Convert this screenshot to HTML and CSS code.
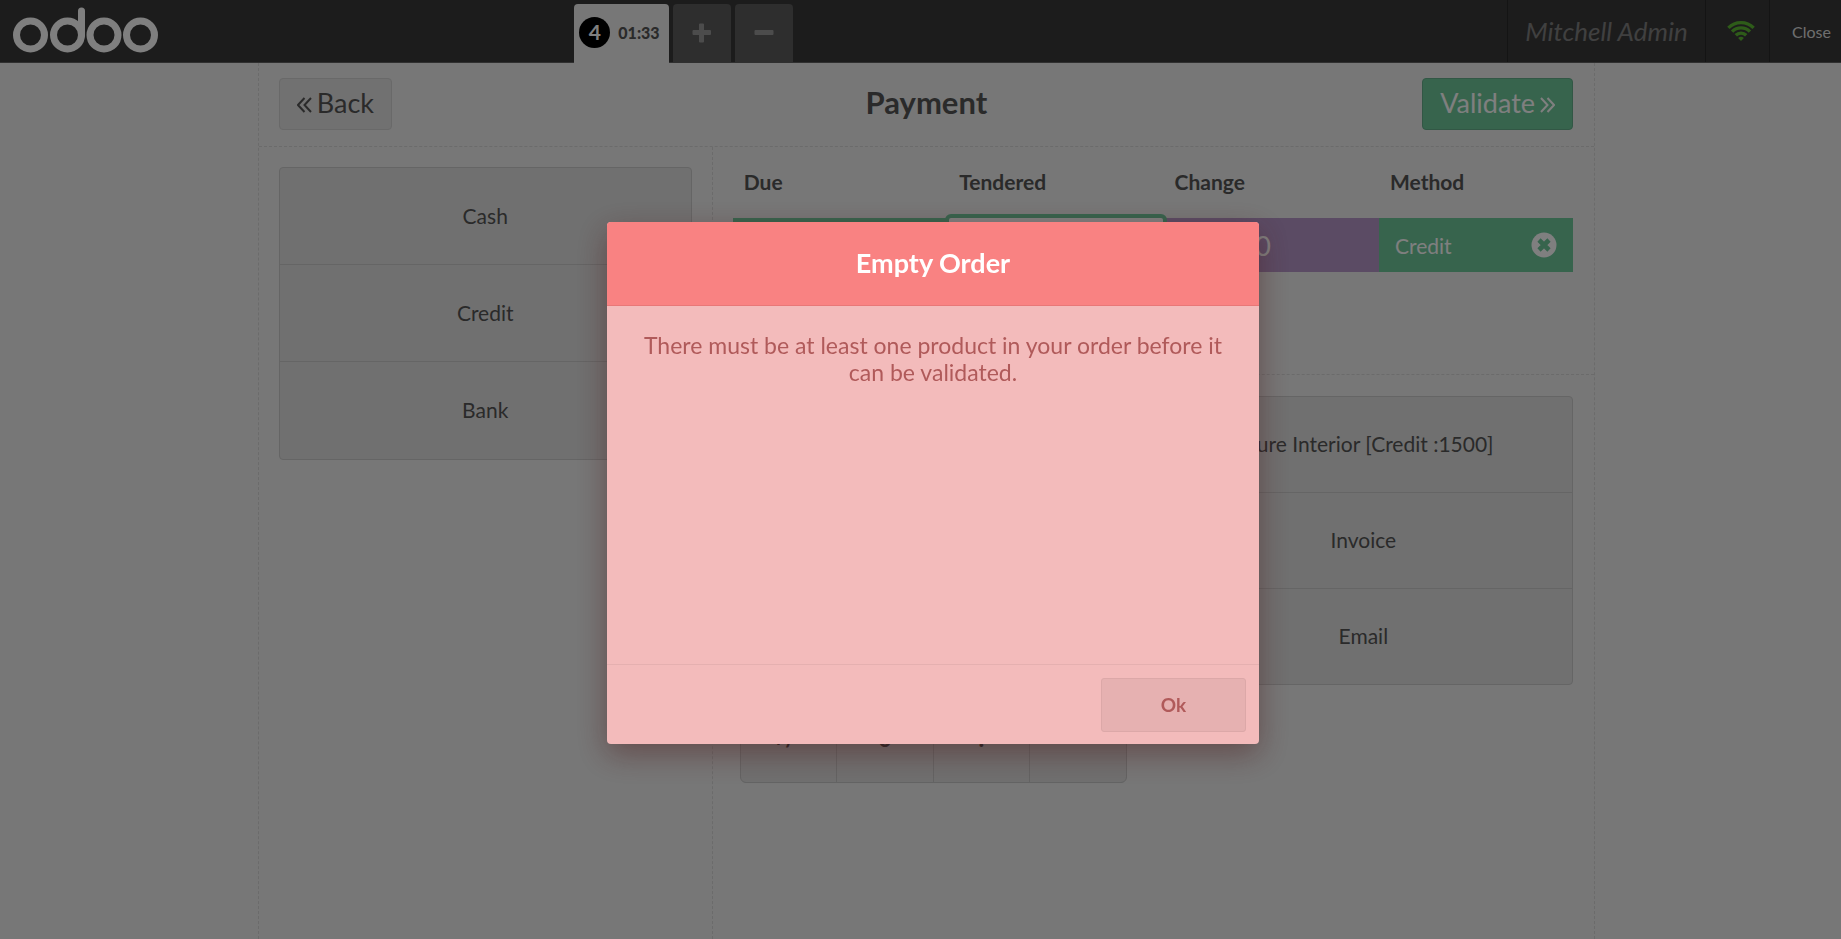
FILE: index.html
```html
<!DOCTYPE html>
<html lang="en">
<head>
<meta charset="utf-8">
<meta name="viewport" content="width=device-width, initial-scale=1">
<title>Odoo POS - Payment</title>
<link rel="stylesheet" href="styles.css">
</head>
<body>
<div class="pos">
  <header class="topbar">
    <svg class="logo" viewBox="0 0 146 46" role="img" aria-label="odoo">
      <g fill="none" stroke="#fff" stroke-width="7">
        <circle cx="17.500" cy="28" r="14"/>
        <circle cx="54.500" cy="28" r="14"/>
        <circle cx="91" cy="28" r="14"/>
        <circle cx="127.500" cy="28" r="14"/>
        <path d="M68.500 28V4" stroke-linecap="round"/>
      </g>
    </svg>
    <nav class="orders" aria-label="Orders">
      <button class="order selected"><span class="seq">4</span><span>01:33</span></button>
      <button class="order tool" aria-label="New order"><svg viewBox="0 0 20 20"><path d="M7 1.500Q7 .5 8 .5h3q1 0 1 1V7h6q1 0 1 1v3q0 1-1 1h-6v6.500q0 1-1 1H8q-1 0-1-1V12H1.500q-1 0-1-1V8q0-1 1-1H7z"/></svg></button>
      <button class="order tool" aria-label="Delete order"><svg viewBox="0 0 20 20"><rect x=".5" y="7" width="19" height="5" rx="1"/></svg></button>
    </nav>
    <div class="username">Mitchell Admin</div>
    <div class="wifi">
      <svg viewBox="0 0 30 22" role="img" aria-label="Connected">
        <g fill="none" stroke="#5cb832" stroke-width="3.400">
          <path d="M2.400 7.900A17.800 17.800 0 0 1 27.600 7.900"/>
          <path d="M6.100 11.600A12.600 12.600 0 0 1 23.900 11.600"/>
          <path d="M9.800 15.300A7.400 7.400 0 0 1 20.200 15.300"/>
        </g>
        <path d="M15 21l-2.900-2.900A4.100 4.100 0 0 1 17.900 18.100z" fill="#5cb832"/>
      </svg>
    </div>
    <button class="close">Close</button>
  </header>

  <main class="payment">
    <div class="heading">
      <button class="btn"><svg viewBox="0 0 15 16"><path d="M7.500 1 1 8l6.500 7M14 1 7.500 8l6.500 7"/></svg>Back</button>
      <h1>Payment</h1>
      <button class="btn validate">Validate<svg viewBox="0 0 15 16"><path d="M1 1l6.500 7L1 15M7.500 1 14 8l-6.500 7"/></svg></button>
    </div>
    <div class="columns">
      <section class="methods">
        <div class="stack">
          <button>Cash</button>
          <button>Credit</button>
          <button>Bank</button>
        </div>
      </section>
      <section class="details">
        <div class="lines">
          <table>
            <thead><tr><th>Due</th><th>Tendered</th><th>Change</th><th class="last">Method</th></tr></thead>
            <tbody><tr>
              <td>0.00</td>
              <td class="tendered"><span>0.00</span></td>
              <td class="change">0.00</td>
              <td class="method"><div>Credit
                <button aria-label="Delete line"><svg viewBox="0 0 26 26"><circle cx="13" cy="13" r="12.500" fill="#fff"/><path d="M8 8l10 10M18 8 8 18" stroke="#6ec89b" stroke-width="4.600"/></svg></button></div></td>
            </tr></tbody>
          </table>
        </div>
        <div class="lower">
          <div class="numpad">
            <button>1</button><button>2</button><button>3</button><button>+10</button>
            <button>4</button><button>5</button><button>6</button><button>+20</button>
            <button>7</button><button>8</button><button>9</button><button>+50</button>
            <button>+/-</button><button>0</button><button>.</button><button aria-label="Backspace"><svg viewBox="0 0 22 14"><path d="M7 1h14v12H7L1 7z" fill="none" stroke="#555" stroke-width="2"/></svg></button>
          </div>
          <div class="stack options">
            <button>Azure Interior [Credit :1500]</button>
            <button>Invoice</button>
            <button>Email</button>
          </div>
        </div>
      </section>
    </div>
  </main>
</div>

<div class="overlay">
  <div class="popup" role="alertdialog" aria-labelledby="popup-title" aria-describedby="popup-text">
    <h2 id="popup-title">Empty Order</h2>
    <p id="popup-text">There must be at least one product in your order before it can be validated.</p>
    <footer><button>Ok</button></footer>
  </div>
</div>
</body>
</html>
```
FILE: styles.css
```css
* { box-sizing: border-box; }

body {
  margin: 0;
  background: #eee;
  color: #555;
  font-family: Lato, "Open Sans", sans-serif;
  overflow: hidden;
}

button {
  margin: 0;
  padding: 0;
  border: 0;
  background: none;
  color: inherit;
  font: inherit;
}

h1, h2, p { margin: 0; }

.pos {
  display: flex;
  flex-direction: column;
  min-height: 100vh;
}

/* Top bar */
.topbar {
  display: flex;
  height: 63px;
  border-bottom: 1px solid #606060;
  background: #393939;
  color: #fff;
}

.logo {
  width: 146px;
  height: 46px;
  margin: 7px 0 0 13px;
}

.orders {
  display: flex;
  flex: 1;
  gap: 4px;
  margin-left: 415px;
  padding-top: 4px;
}

.order {
  display: flex;
  align-items: center;
  justify-content: center;
  width: 58px;
  height: 58px;
  border-radius: 4px 4px 0 0;
  background: #5c5c5c;
}

.order.selected {
  gap: 8px;
  width: 95px;
  height: 59px;
  padding: 0 4px 3px 0;
  background: #eee;
  color: #555;
  font-size: 16px;
  font-weight: 900;
}

.seq {
  width: 31px;
  height: 31px;
  border-radius: 50%;
  background: #000;
  color: #fff;
  font-size: 21px;
  font-weight: 700;
  line-height: 30px;
  text-align: center;
}

.tool svg {
  width: 20px;
  height: 20px;
  fill: #999;
}

.username,
.wifi,
.close {
  display: flex;
  align-items: center;
  justify-content: center;
  border-left: 1px solid #292929;
}

.username {
  width: 198px;
  color: #808080;
  font-size: 26px;
  font-style: italic;
}

.wifi {
  width: 64px;
  padding-left: 6px;
}

.wifi svg {
  width: 30px;
  height: 22px;
}

.close {
  width: 72px;
  padding: 0 0 0 12px;
  color: #ddd;
  font-size: 16px;
}

/* Payment screen */
.payment {
  display: flex;
  flex: 1;
  flex-direction: column;
  margin: 0 246px 0 14%;
  border: dashed #d6d6d6;
  border-width: 0 1px;
}

.heading {
  display: flex;
  align-items: center;
  justify-content: space-between;
  position: relative;
  height: 84px;
  padding: 0 21px 2px 20px;
  border-bottom: 1px dashed #d6d6d6;
}

.heading h1 {
  position: absolute;
  inset: 0;
  font-size: 31px;
  font-weight: 700;
  line-height: 79px;
  text-align: center;
  pointer-events: none;
}

.btn {
  display: flex;
  align-items: center;
  gap: 5px;
  height: 52px;
  padding: 0 17px 2px;
  border: 1px solid #d2d2d2;
  border-radius: 4px;
  background: #e2e2e2;
  font-size: 27px;
}

.btn svg {
  width: 15px;
  height: 16px;
  margin-top: 4px;
  fill: none;
  stroke: currentColor;
  stroke-width: 2;
}

.validate {
  border-color: #64af8a;
  background: #6ec89b;
  color: #fff;
}

.columns {
  display: flex;
  flex: 1;
}

.methods {
  flex: 0 0 34%;
  padding: 20px;
  border-right: 1px dashed #d6d6d6;
}

.stack {
  display: flex;
  flex-direction: column;
  border: 1px solid #cacaca;
  border-radius: 4px;
  background: #e0e0e0;
  font-size: 21px;
}

.stack button {
  height: 97px;
  padding-bottom: 2px;
  border-bottom: 1px solid #cacaca;
}

.stack button:last-child { border-bottom: 0; }

.details {
  flex: 1;
  min-width: 0;
}

.lines {
  height: 228px;
  padding: 0 21px 0 20px;
  border-bottom: 1px dashed #d6d6d6;
}

table {
  width: 100%;
  border-collapse: collapse;
  table-layout: fixed;
  text-align: left;
}

th {
  height: 71px;
  padding: 0 11px 2px;
  font-size: 21px;
  font-weight: 700;
}

th.last { width: 194px; }

td {
  height: 54px;
  padding: 0 16px;
  background: #6ec89b;
  color: #fff;
  font-size: 27px;
}

.tendered {
  position: relative;
  color: #555;
}

.tendered span {
  position: absolute;
  inset: -4px -3px -4px -3px;
  padding: 0 16px;
  border: 4px solid #6ec89b;
  border-radius: 6px;
  background: #fff;
  line-height: 54px;
}

.change {
  padding-left: 54px;
  background: #b696c8;
}

.method div {
  display: flex;
  align-items: center;
  justify-content: space-between;
  font-size: 21px;
}

.method button { display: flex; }

.method svg {
  width: 26px;
  height: 26px;
}

.lower {
  display: flex;
  align-items: flex-start;
  gap: 27px;
  padding: 21px 21px 0 27px;
}

.numpad {
  display: grid;
  flex: 0 0 387px;
  grid-template-columns: repeat(4, 1fr);
  grid-template-rows: repeat(4, 1fr);
  gap: 1px;
  height: 387px;
  overflow: hidden;
  border: 1px solid #c8c8c8;
  border-radius: 6px;
  background: #c8c8c8;
  font-size: 24px;
  font-weight: 700;
}

.numpad button {
  padding-top: 6px;
  background: #e0e0e0;
}

.numpad svg {
  width: 22px;
  height: 14px;
  margin-bottom: 4px;
}

.options { flex: 1; }
.options button { height: 96px; }
.options button:last-child { height: 95px; }

/* Error popup */
.overlay {
  display: flex;
  align-items: center;
  justify-content: center;
  position: fixed;
  inset: 0;
  padding: 27px 0 0 25px;
  background: rgba(0, 0, 0, 0.5);
}

.popup {
  display: flex;
  flex-direction: column;
  width: 652px;
  min-height: 522px;
  overflow: hidden;
  border-radius: 4px;
  background: #f3bbbb;
  box-shadow: 0 10px 30px rgba(75, 25, 25, 0.45);
  color: #b05a5a;
  text-align: center;
}

.popup h2 {
  height: 84px;
  border-bottom: 1px solid #e87777;
  background: #f98282;
  color: #fff;
  font-size: 27px;
  font-weight: 700;
  line-height: 82px;
}

.popup p {
  flex: 1;
  padding: 26px 26px 0;
  font-size: 23px;
  line-height: 27px;
}

.popup footer {
  display: flex;
  justify-content: flex-end;
  height: 80px;
  padding: 13px 13px 0;
  border-top: 1px solid #e5b0b0;
}

.popup footer button {
  width: 145px;
  height: 54px;
  padding-bottom: 2px;
  border: 1px solid #dca8a8;
  border-radius: 3px;
  background: #e6b1b1;
  font-size: 19px;
  font-weight: 700;
}
```
